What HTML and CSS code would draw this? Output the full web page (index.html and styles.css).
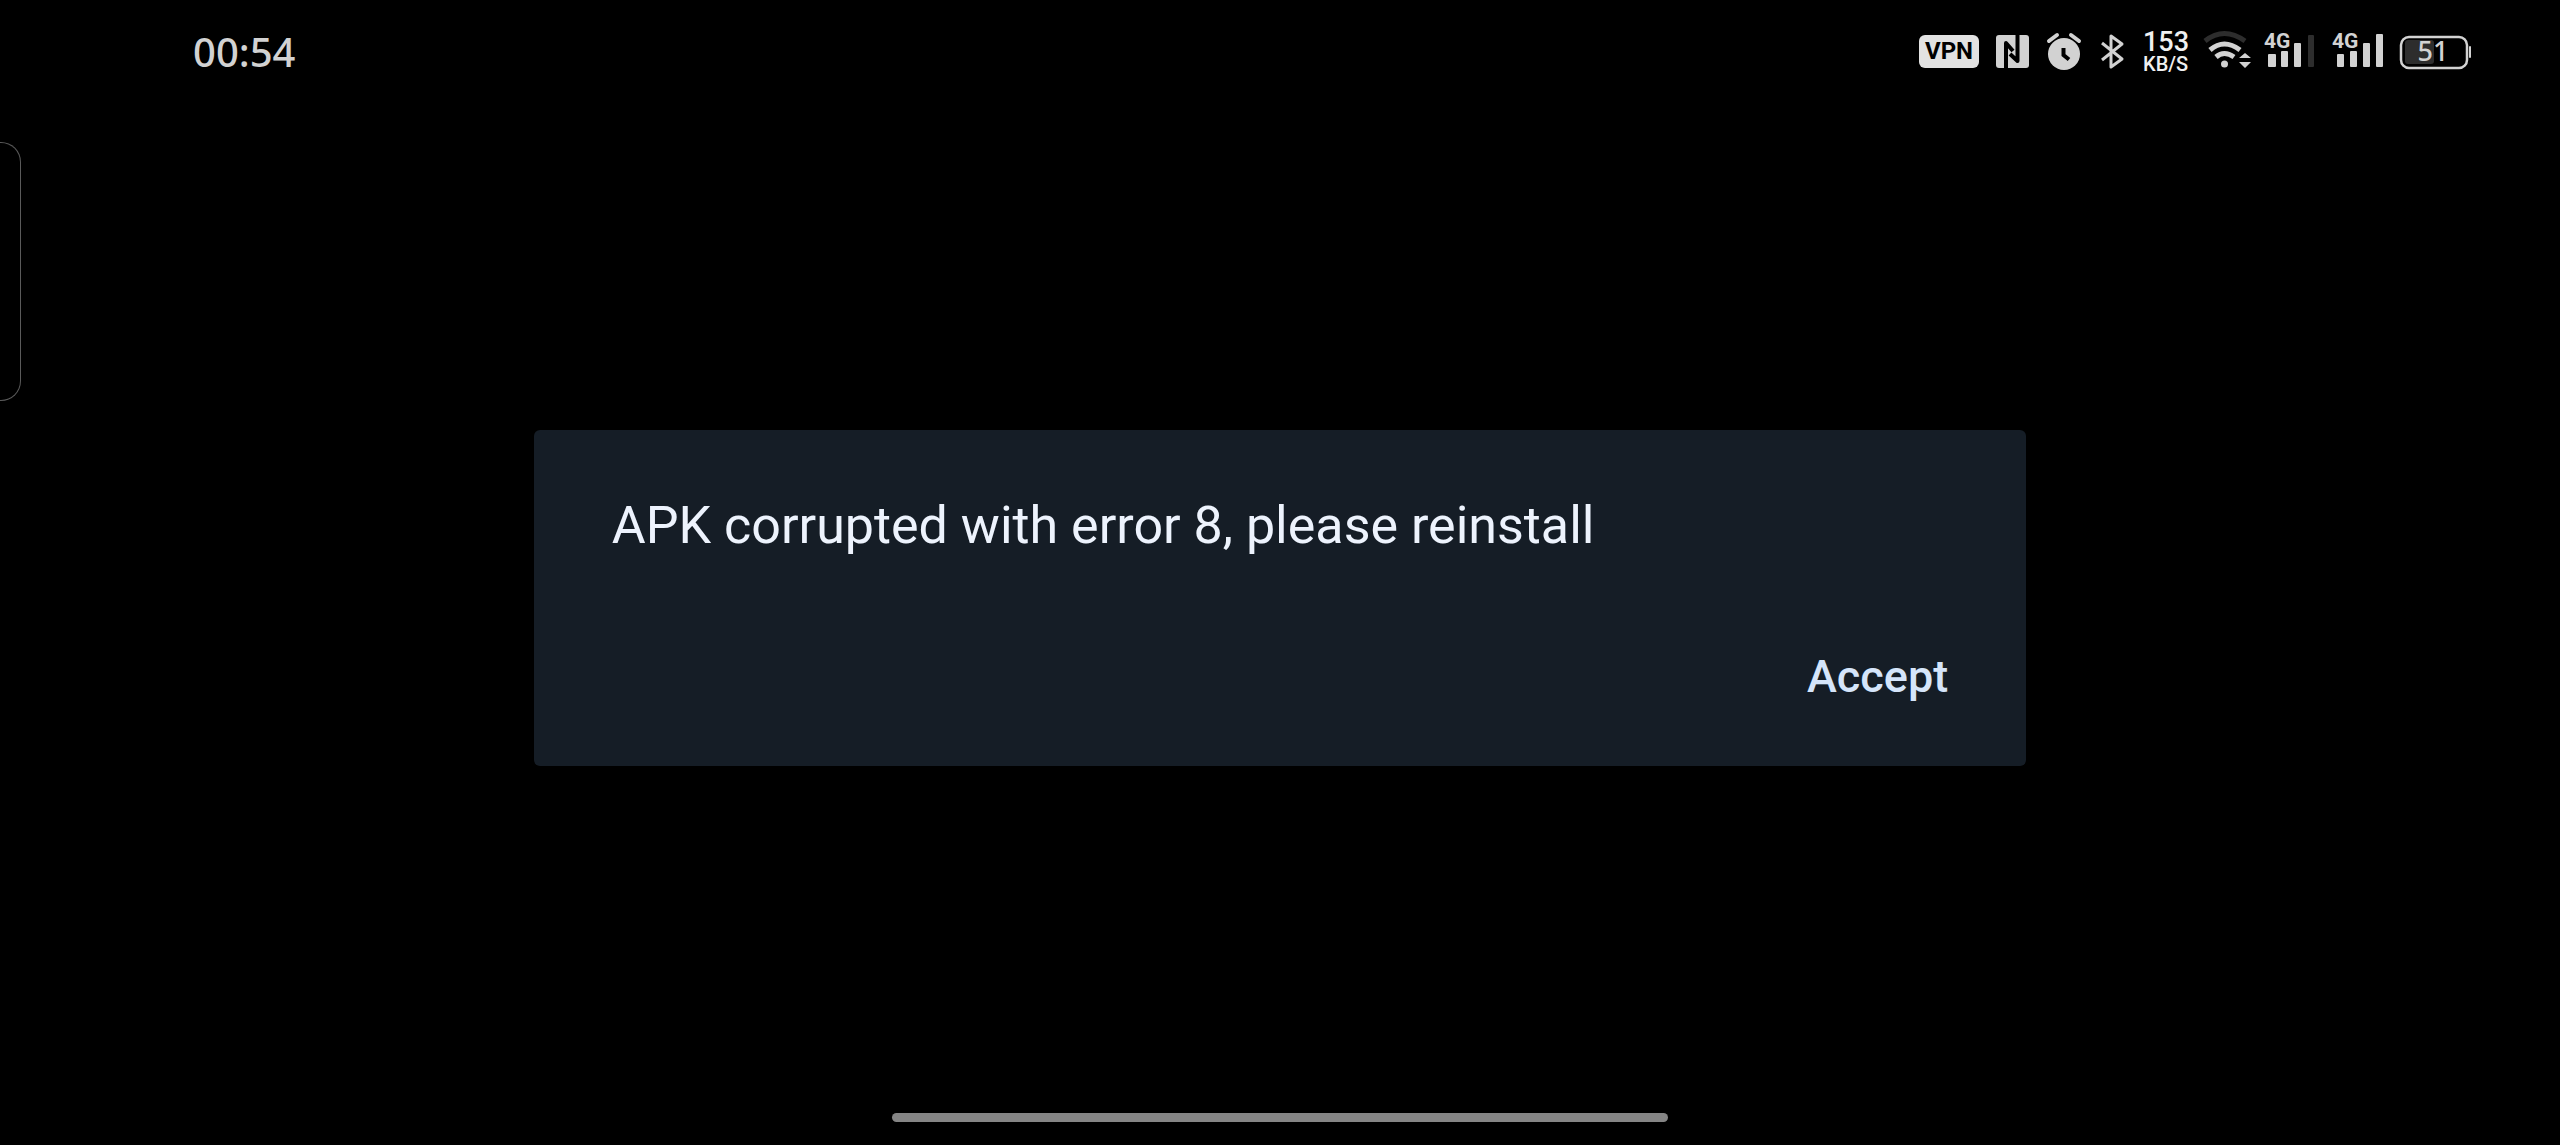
FILE: index.html
```html
<!DOCTYPE html>
<html lang="en">

<head>
    <meta charset="UTF-8">
    <meta name="viewport" content="width=device-width, initial-scale=1.0">
    <title>APK corrupted</title>
    <link rel="stylesheet" href="styles.css">
</head>

<body>

    <header class="status-bar">
        <time class="clock">00:54</time>

        <div class="status-icons">
            <span class="vpn">VPN</span>

            <!-- NFC -->
            <svg width="35" height="39" viewBox="0 0 35 39">
                <rect x="1" y="3" width="33" height="33" rx="3" fill="#d2d2d2" />
                <path d="M11 37V11L18 19M22.500 2V29L15 22" fill="none" stroke="#000" stroke-width="4" stroke-linejoin="round" />
            </svg>

            <!-- alarm -->
            <svg width="37" height="39" viewBox="0 0 37 39">
                <circle cx="18" cy="22" r="16" fill="#d2d2d2" />
                <path d="M3 9L11 3M33 9L25 3" stroke="#d2d2d2" stroke-width="4" stroke-linecap="round" />
                <path d="M17.500 16V23L23 27.500" fill="none" stroke="#000" stroke-width="4" />
            </svg>

            <!-- bluetooth -->
            <svg width="28" height="39" viewBox="0 0 28 39">
                <path d="M3 11L23 27L12 35V4L23 12L3 28" fill="none" stroke="#d2d2d2" stroke-width="3" stroke-linejoin="round" />
            </svg>

            <div class="speed">
                <span class="speed-value">153</span>
                <span class="speed-unit">KB/S</span>
            </div>

            <!-- wifi -->
            <svg width="44" height="39" viewBox="0 0 44 39">
                <path d="M1 9Q20 -6 41 9" fill="none" stroke="#2d2d2d" stroke-width="5" />
                <path d="M6 18Q20 6 36 18" fill="none" stroke="#d2d2d2" stroke-width="5" />
                <path d="M12 25Q20 18 30 25" fill="none" stroke="#d2d2d2" stroke-width="5" />
                <circle cx="20.500" cy="32" r="3.500" fill="#d2d2d2" />
                <path d="M35 26L41 21L47 26ZM35 30L41 36L47 30Z" fill="#d2d2d2" />
            </svg>

            <svg width="52" height="39" viewBox="0 0 52 39">
                <g fill="#d2d2d2">
                    <text class="network" x="0" y="16">4G</text>
                    <rect x="4" y="22" width="8" height="13" rx="1" />
                    <rect x="17" y="19" width="7" height="16" rx="1" />
                    <rect x="30" y="11" width="7" height="24" rx="1" />
                </g>
                <rect x="44" y="3" width="6" height="32" rx="1" fill="#2d2d2d" />
            </svg>

            <svg width="52" height="39" viewBox="0 0 52 39">
                <g fill="#d2d2d2">
                    <text class="network" x="0" y="16">4G</text>
                    <rect x="5" y="22" width="7" height="13" rx="1" />
                    <rect x="18" y="19" width="7" height="16" rx="1" />
                    <rect x="31" y="11" width="7" height="24" rx="1" />
                    <rect x="44" y="2" width="7" height="33" rx="1" />
                </g>
            </svg>

            <!-- battery -->
            <svg width="71" height="39" viewBox="0 0 71 39">
                <rect x="5" y="8" width="29" height="24" rx="3" fill="#2d2d2d" />
                <rect x="1" y="5" width="66" height="31" rx="8" fill="none" stroke="#d2d2d2" stroke-width="2.500" />
                <rect x="69" y="14" width="2" height="12" rx="1" fill="#d2d2d2" />
                <text class="battery-level" x="33" y="29" text-anchor="middle" fill="#d2d2d2">51</text>
            </svg>
        </div>
    </header>

    <div class="side-panel"></div>

    <main>
        <div class="dialog" role="alertdialog" aria-labelledby="message">
            <p id="message">APK corrupted with error 8, please reinstall</p>
            <button class="accept">Accept</button>
        </div>
    </main>

    <footer>
        <div class="home-bar"></div>
    </footer>

</body>

</html>
```
FILE: styles.css
```css
body {
    display: flex;
    flex-direction: column;
    min-height: 100vh;
    margin: 0px;
    background: #000;
    font-family: Roboto, sans-serif;
}

.status-bar {
    display: flex;
    justify-content: space-between;
    align-items: center;
    height: 45px;
    padding: 29px 89px 8px 193px;
}

.clock {
    color: #d2d2d2;
    font-family: "Noto Sans", sans-serif;
    font-size: 40px;
    font-weight: 500;
    line-height: 44px;
}

.status-icons {
    display: flex;
    align-items: center;
    gap: 16px;
}

.status-icons svg {
    display: block;
    overflow: visible;
}

.vpn {
    width: 60px;
    border-radius: 6px;
    background: #e2e2e2;
    color: #000;
    font-size: 24px;
    font-weight: bold;
    line-height: 33px;
    text-align: center;
}

.speed {
    display: flex;
    flex-direction: column;
    gap: 2px;
    width: 45px;
    color: #f0f0f0;
    font-weight: 500;
}

.speed-value {
    font-size: 27px;
    line-height: 22px;
}

.speed-unit {
    font-size: 20px;
    line-height: 18px;
}

.network {
    font-size: 21px;
    font-weight: bold;
}

.battery-level {
    font-family: "Noto Sans", sans-serif;
    font-size: 27px;
    font-weight: 500;
}

/* edge of the drawer that slides in from the left */
.side-panel {
    position: absolute;
    top: 142px;
    left: 0px;
    width: 20px;
    height: 257px;
    border: 1px solid #5a5a5a;
    border-left: none;
    border-radius: 0px 20px 20px 0px;
}

main {
    display: flex;
    flex: 1;
    justify-content: center;
    align-items: center;
}

.dialog {
    display: flex;
    flex-direction: column;
    gap: 95px;
    box-sizing: border-box;
    width: 58.3%;
    padding: 66px 78px 63px;
    border-radius: 6px;
    background: #151d26;
}

#message {
    margin: 0px;
    color: #edf3fd;
    font-size: 52px;
    line-height: 60px;
}

.accept {
    align-self: flex-end;
    padding: 0px;
    border: none;
    background: none;
    color: #d5e5fa;
    font-family: inherit;
    font-size: 45px;
    font-weight: 500;
    line-height: 52px;
    cursor: pointer;
}

footer {
    padding-bottom: 23px;
}

.home-bar {
    width: 30.3%;
    height: 9px;
    margin: 0px auto;
    border-radius: 5px;
    background: #858585;
}
```
